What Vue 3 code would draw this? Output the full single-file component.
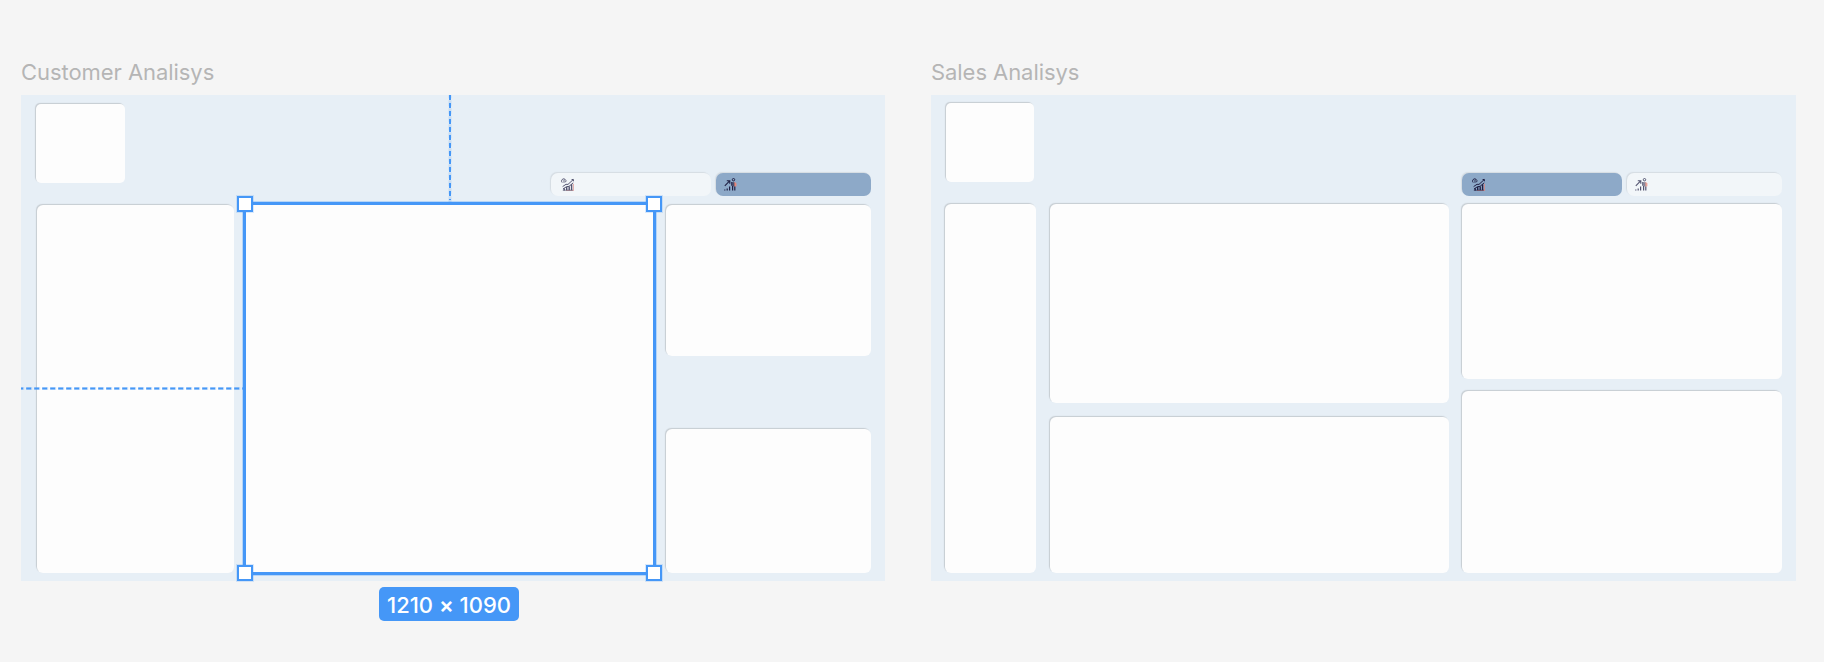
<script setup>
const handles = ['tl', 'tr', 'bl', 'br']
const frames = [
  { id: 'customer', title: 'Customer Analisys', active: 1 },
  { id: 'sales', title: 'Sales Analisys', active: 0 },
]
</script>

<template>
  <main class="canvas">
    <section v-for="f in frames" :key="f.id" class="artboard" :class="f.id">
      <h2 class="title">{{ f.title }}</h2>
      <div class="frame">
        <header class="top">
          <div class="card logo"></div>
          <nav class="tabs">
            <div class="tab first" :class="{ active: f.active === 0 }">
              <svg class="icon" viewBox="0 0 13 13" fill="none">
                <path d="M1.2 4.6A2.2 2.2 0 1 1 4.6 4.2" stroke="#202044" stroke-width=".9" />
                <path d="M3 1.6v3.2" stroke="#202044" stroke-width=".9" />
                <path d="M1.6 8.6 5 6.3l2 .1L12.2 1.6M10.6 1.5h1.8v1.8" stroke="#202044" stroke-width="1" />
                <path d="M2 11 5.6 8.6l2.4-.2L12.2 4.8" stroke="#202044" stroke-width="1" />
                <path d="M3.2 12.4V10.3M5.7 12.4V9M8.2 12.4V8.4M10.6 12.4V6.2" stroke="#202044" stroke-width="1.4" />
                <path d="M12.4 5.8v7M5 12.7h7.5" stroke="#d98682" stroke-width=".9" />
                <path d="M1.8 12.2h10" stroke="#202044" stroke-width=".7" />
              </svg>
            </div>
            <div class="tab second" :class="{ active: f.active === 1 }">
              <svg class="icon" viewBox="0 0 13 13" fill="none">
                <path d="M.8 7.8 5.4 3.2M2.8 2.8h3v3" stroke="#202044" stroke-width="1.1" />
                <path d="M.8 12.4v-1M3.2 12.4v-1.8M5.6 12.4V8.4" stroke="#202044" stroke-width="1.2" />
                <circle cx="9.5" cy="1.7" r="1.2" stroke="#202044" stroke-width="1" />
                <path d="M8.3 4.2H11v4.2H8.3z" fill="#34304f" fill-opacity=".75" />
                <path d="M10.4 3.8 12.4 5.2v3l-2 .6z" fill="#e98576" />
                <path d="M7.8 3.9v3.8M8.6 8v4.5M10.8 8.4v4.1" stroke="#202044" stroke-width="1.2" />
              </svg>
            </div>
          </nav>
        </header>

        <div v-if="f.id === 'customer'" class="body">
          <div class="card"></div>
          <div class="card selected"></div>
          <div class="stack">
            <div class="card"></div>
            <div class="card"></div>
          </div>
        </div>
        <div v-else class="body">
          <div class="card"></div>
          <div class="stack mid">
            <div class="card"></div>
            <div class="card"></div>
          </div>
          <div class="stack end">
            <div class="card"></div>
            <div class="card"></div>
          </div>
        </div>

        <template v-if="f.id === 'customer'">
          <svg class="guides" width="865" height="486" viewBox="0 0 865 486" fill="none">
            <path class="halo" d="M0 293.5H222M429 0V107" />
            <path class="dash" d="M0 293.5H222" stroke-dashoffset="-5.2" />
            <path class="dash" d="M429 0V105" />
          </svg>
          <div class="selection">
            <i v-for="h in handles" :key="h" class="handle" :class="h"></i>
            <span class="size">1210 <b>×</b> 1090</span>
          </div>
        </template>
      </div>
    </section>
  </main>
</template>

<style>
html, body { margin: 0; background: #f5f5f5; }
</style>

<style scoped>
.canvas {
  box-sizing: border-box;
  width: 1824px;
  height: 662px;
  overflow: hidden;
  display: flex;
  gap: 45px;
  padding: 56px 0 0 21px;
  background: #f5f5f5;
  font-family: Inter, "Liberation Sans", sans-serif;
}
.artboard { width: 865px; }
.title {
  margin: 0;
  height: 39px;
  line-height: 32px;
  font-size: 22px;
  font-weight: 400;
  letter-spacing: -.06px;
  color: #b5b5b5;
  white-space: nowrap;
}
.frame {
  position: relative;
  box-sizing: border-box;
  width: 865px;
  height: 486px;
  padding: 9px 15px 8px 15px;
  display: flex;
  flex-direction: column;
  background: #e7eff6;
}
.customer .frame { width: 864.4px; padding-right: 14px; }
.card {
  background: #fdfdfd;
  border-radius: 6px;
  box-shadow: -1px -1px 1px rgba(70, 70, 70, .2);
}
.top { display: flex; justify-content: space-between; height: 101px; flex: none; }
.logo { width: 89px; height: 79px; border-radius: 5px; }
.tabs { display: flex; gap: 5px; padding-top: 69px; }
.tab {
  box-sizing: border-box;
  height: 22.5px;
  border-radius: 7px;
  padding: 4.6px 0 0 9.5px;
  background: #f2f6f9;
  box-shadow: -1px -1px 1px rgba(70, 70, 70, .11);
}
.tab.active { background: #8da9c8; }
.tab.first { width: 160px; }
.tab.second { width: 155px; padding-left: 8px; }
.icon { display: block; width: 13px; height: 13px; opacity: .75; }
.tab.active .icon { opacity: 1; }
.body { flex: 1; display: grid; grid-template-columns: 197px 410px 205px; justify-content: space-between; }
.customer .body { margin-left: 1px; }
.selected { border-radius: 0; box-shadow: none; }
.stack { display: grid; grid-template-rows: 151px 144px; align-content: space-between; }

.sales .frame { padding: 8px 14px 8px 14px; }
.sales .logo { margin-left: 1px; width: 88px; }
.sales .tabs { padding-top: 70px; }
.sales .body { grid-template-columns: 91px 399px 320px; column-gap: 0; }
.stack.mid { grid-template-rows: 199px 156px; }
.stack.end { grid-template-rows: 175px 182px; }

.guides { position: absolute; left: 0; top: 0; }
.halo { stroke: #4597f7; stroke-opacity: .2; stroke-width: 3; stroke-dasharray: 6 2; stroke-dashoffset: 2.8; }
.dash { stroke: #4597f7; stroke-width: 2; stroke-dasharray: 5 3; }
.selection {
  position: absolute;
  box-sizing: border-box;
  left: 222px;
  top: 107px;
  width: 413px;
  height: 373px;
  border: 3px solid #4597f7;
  box-shadow: 0 0 0 1px rgba(69, 151, 247, .3);
}
.handle {
  position: absolute;
  box-sizing: border-box;
  width: 16px;
  height: 16px;
  background: #fff;
  border: 2px solid #4597f7;
  box-shadow: 0 0 0 1px rgba(69, 151, 247, .2);
}
.tl, .tr { top: -9px; }
.bl, .br { bottom: -9px; }
.tl, .bl { left: -9px; }
.tr, .br { right: -9px; }
.size {
  position: absolute;
  left: 133px;
  top: 382px;
  width: 140px;
  height: 34px;
  line-height: 36px;
  border-radius: 5px;
  background: #4597f7;
  color: #fff;
  font-size: 22px;
  font-weight: 500;
  text-align: center;
  white-space: nowrap;
}
.size b { font-weight: 600; }
</style>
